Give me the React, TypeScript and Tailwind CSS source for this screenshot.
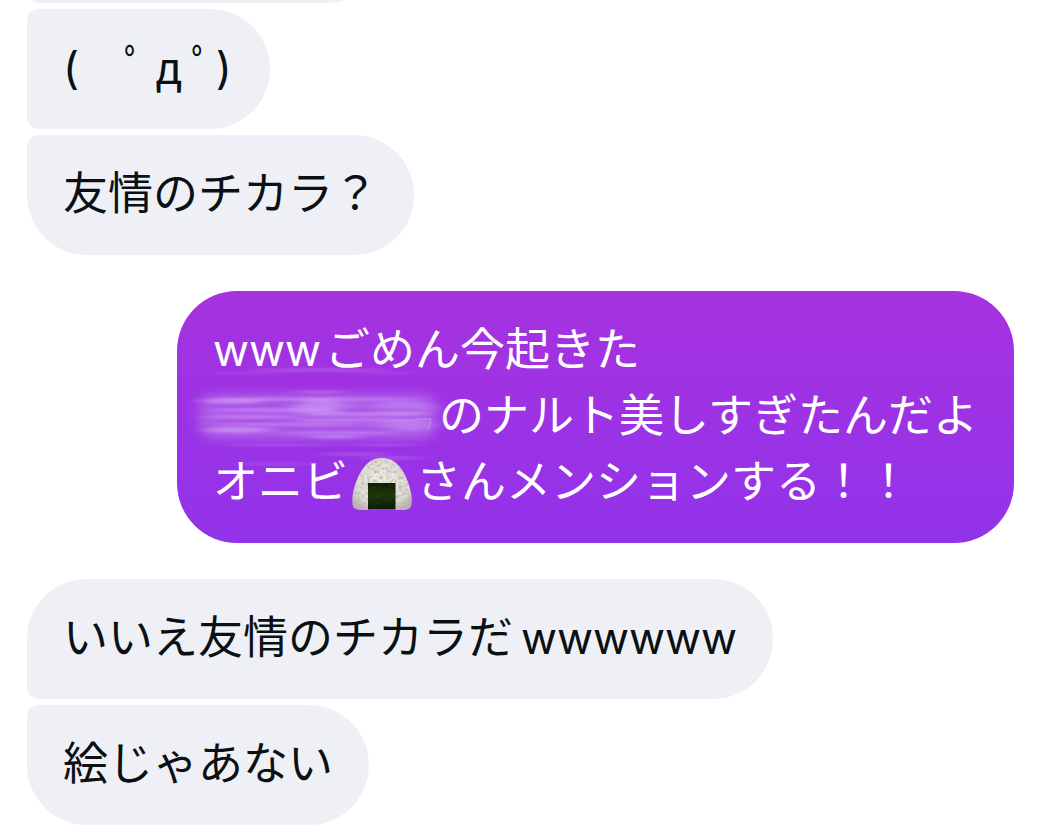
import type { ReactNode } from "react";
import clsx from "clsx";

type Position = "first" | "middle" | "last" | "single";

const corners: Record<Position, string> = {
  first: "rounded-[60px] rounded-bl-xl",
  middle: "rounded-r-[60px] rounded-l-xl",
  last: "rounded-[60px] rounded-tl-xl",
  single: "rounded-[60px]",
};

function Bubble({ position, sent = false, children }: { position: Position; sent?: boolean; children: ReactNode }) {
  return (
    <li
      className={clsx(
        "w-fit max-w-full px-9 pt-[23px] pb-[31px]",
        corners[position],
        sent ? "self-end bg-linear-to-b from-[#a632df] to-[#9232ea] text-white" : "self-start bg-[#eff0f5] text-[#0b1014]",
      )}
    >
      {children}
    </li>
  );
}

function Latin({ className, children }: { className?: string; children: ReactNode }) {
  return <span className={clsx("font-[Inter,sans-serif] text-[44px] leading-none", className)}>{children}</span>;
}

function RiceBall() {
  return (
    <svg role="img" aria-label="おにぎり" viewBox="0 0 60 52" className="mx-1 inline-block h-[52px] w-[60px] align-[-12px]">
      <defs>
        <filter id="grain" x="0" y="0" width="100%" height="100%">
          <feTurbulence type="fractalNoise" baseFrequency="0.32" numOctaves="2" seed="8" result="noise" />
          <feColorMatrix in="noise" type="matrix" values="0 0 0 0 0.5  0 0 0 0 0.48  0 0 0 0 0.42  2.4 0 0 0 -0.95" result="specks" />
          <feComposite in="specks" in2="SourceAlpha" operator="in" result="inside" />
          <feMerge>
            <feMergeNode in="SourceGraphic" />
            <feMergeNode in="inside" />
          </feMerge>
        </filter>
        <radialGradient id="rice" cx="0.5" cy="0.45" r="0.62">
          <stop offset="0" stopColor="#efefe9" />
          <stop offset="0.75" stopColor="#dedcd6" />
          <stop offset="1" stopColor="#b9b1b5" />
        </radialGradient>
        <linearGradient id="nori" x1="0" y1="0" x2="0" y2="1">
          <stop offset="0" stopColor="#0f1f06" />
          <stop offset="0.45" stopColor="#1d360c" />
          <stop offset="1" stopColor="#0b1a03" />
        </linearGradient>
      </defs>
      <path
        d="M30 0C24 0 18 2 13 8C7 15 3 25 1 35C0 41 0 45 1 48C2 51 6 52 10 52H50C55 52 58 51 59 48C60 45 60 40 59 35C57 25 53 15 47 8C42 2 36 0 30 0Z"
        fill="url(#rice)"
        filter="url(#grain)"
      />
      <path d="M16 25H43.500V51.500H16Z" fill="url(#nori)" />
      <path d="M18 31L24 29M28 34L36 31M20 40L28 38M32 43L41 39M21 47L27 45M37 28L41 27" stroke="#345019" strokeWidth="1" opacity="0.4" />
    </svg>
  );
}

const streaks = [
  [130, 5, 70, 1.5, 0.25],
  [60, 8, 40, 1, 0.15],
  [195, 8, 34, 1, 0.15],
  [45, 36, 34, 3, 0.4],
  [130, 27, 26, 1.5, 0.3],
  [130, 34, 100, 2, 0.3],
  [130, 42, 26, 9, 0.4],
  [85, 45, 60, 1.5, 0.35],
  [186, 49, 56, 2, 0.35],
  [60, 52, 46, 1.5, 0.35],
  [166, 55, 70, 1.5, 0.35],
  [215, 43, 30, 7, 0.25],
  [218, 60, 26, 6, 0.3],
  [100, 59, 70, 1.5, 0.3],
  [48, 65, 32, 3, 0.45],
  [150, 68, 60, 1.5, 0.3],
  [145, 72, 28, 1.5, 0.45],
  [90, 80, 54, 1, 0.25],
  [195, 80, 34, 1, 0.25],
  [165, 89, 34, 1.5, 0.25],
  [204, 93, 30, 1.5, 0.25],
  [85, 99, 44, 1.5, 0.15],
];

function SmudgedName() {
  return (
    <span className="relative inline-block h-9 w-[226px] align-middle">
      <svg aria-hidden="true" viewBox="0 2 256 106" className="pointer-events-none absolute top-1/2 -left-6 h-[106px] w-[256px] -translate-y-1/2 overflow-visible">
        <defs>
          <filter id="haze" filterUnits="userSpaceOnUse" x="-20" y="0" width="300" height="106">
            <feGaussianBlur stdDeviation="7 5" />
          </filter>
          <filter id="streak" filterUnits="userSpaceOnUse" x="-20" y="-10" width="300" height="130">
            <feGaussianBlur stdDeviation="9 1.2" />
          </filter>
        </defs>
        <rect x="11" y="29" width="236" height="45" rx="14" fill="#c58bf0" opacity="0.5" filter="url(#haze)" />
        <g fill="#dcb8fa" filter="url(#streak)">
          {streaks.map(([cx, cy, rx, ry, opacity]) => (
            <ellipse key={`${cx}-${cy}`} cx={cx} cy={cy} rx={rx} ry={ry} opacity={opacity} />
          ))}
        </g>
        <g stroke="#9a3bdd" strokeWidth="1.500" opacity="0.6" filter="url(#streak)">
          <path d="M20 41H100M150 45H232M28 56H110M90 64H205M64 38H118" />
        </g>
        <path d="M226 54H242L239 65" fill="none" stroke="#d7b5f5" strokeWidth="1.500" opacity="0.35" />
      </svg>
    </span>
  );
}

export default function App() {
  return (
    <main lang="ja" className="min-h-screen overflow-hidden bg-white pr-[23px] pb-3 pl-[27px] font-['Noto_Sans_CJK_JP',sans-serif] text-[45px] leading-[66px]">
      <div className="flex h-[3px] items-end overflow-hidden">
        <div className="h-[120px] w-[360px] shrink-0 rounded-r-[60px] rounded-l-xl bg-[#eff0f5]" />
      </div>
      <ul className="mt-1.5 flex flex-col gap-1.5">
        <Bubble position="middle">
          <Latin>(</Latin>　ﾟ<span className="mx-[9px]">д</span>ﾟ<Latin className="mx-0.5">)</Latin>
        </Bubble>
        <Bubble position="last">友情のチカラ？</Bubble>
      </ul>
      <ul className="mt-9 flex flex-col">
        <Bubble position="single" sent>
          <p>
            <Latin className="mr-1">www</Latin>ごめん今起きた
          </p>
          <p>
            <SmudgedName />
            のナルト美しすぎたんだよ
          </p>
          <p>
            オニビ
            <RiceBall />
            さんメンションする！！
          </p>
        </Bubble>
      </ul>
      <ul className="mt-9 flex flex-col gap-1.5">
        <Bubble position="first">
          いいえ友情のチカラだ<Latin className="ml-2">wwwwww</Latin>
        </Bubble>
        <Bubble position="last">絵じゃあない</Bubble>
      </ul>
    </main>
  );
}
